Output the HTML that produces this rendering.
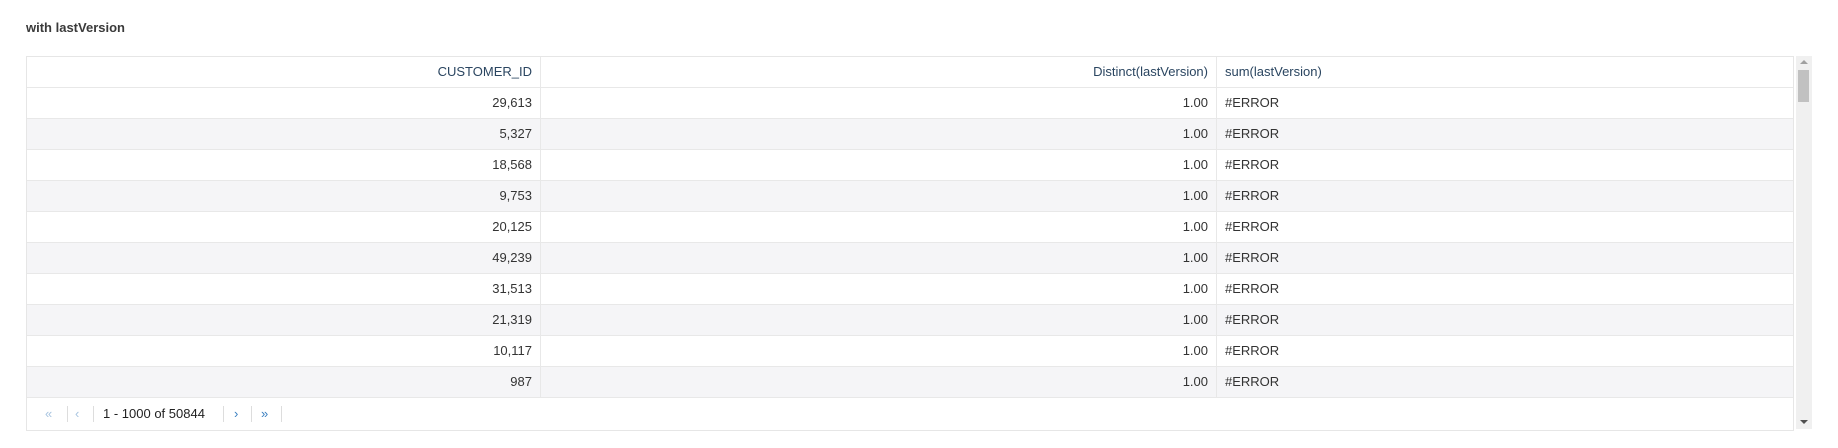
<!DOCTYPE html>
<html><head><meta charset="utf-8"><style>
body{margin:0;width:1838px;height:448px;background:#fff;font-family:"Liberation Sans",sans-serif;position:relative;overflow:hidden;color:#333}
.title{position:absolute;left:26px;top:20px;font-size:13px;font-weight:bold;color:#3a3a3a}
.tbl{position:absolute;left:26px;top:56px;width:1768px;border:1px solid #e6e6e6;box-sizing:border-box}
.row{height:31px;display:flex;border-bottom:1px solid #e8e8e8;box-sizing:border-box;font-size:13px;line-height:30px}
.row.alt{background:#f5f5f7}
.c1{width:514px;text-align:right;padding-right:8px;box-sizing:border-box;border-right:1px solid #e8e8e8}
.c2{width:676px;text-align:right;padding-right:8px;box-sizing:border-box;border-right:1px solid #e8e8e8}
.c3{padding-left:8px}
.hdr{color:#2a4560}
.pager{height:32px;position:relative;font-size:13px;line-height:32px}
.pager span{position:absolute}
.sep{position:absolute;top:8px;width:1px;height:16px;background:#ddd}
.sb{position:absolute;left:1796px;top:56px;width:16px;height:373px;background:#f0f0f0}
.thumb{position:absolute;left:1798px;top:70px;width:11px;height:32px;background:#c1c1c1}
</style></head><body>
<div class="title">with lastVersion</div>
<div class="tbl">
<div class="row hdr"><div class="c1">CUSTOMER_ID</div><div class="c2">Distinct(lastVersion)</div><div class="c3">sum(lastVersion)</div></div>
<div class="row"><div class="c1">29,613</div><div class="c2">1.00</div><div class="c3">#ERROR</div></div>
<div class="row alt"><div class="c1">5,327</div><div class="c2">1.00</div><div class="c3">#ERROR</div></div>
<div class="row"><div class="c1">18,568</div><div class="c2">1.00</div><div class="c3">#ERROR</div></div>
<div class="row alt"><div class="c1">9,753</div><div class="c2">1.00</div><div class="c3">#ERROR</div></div>
<div class="row"><div class="c1">20,125</div><div class="c2">1.00</div><div class="c3">#ERROR</div></div>
<div class="row alt"><div class="c1">49,239</div><div class="c2">1.00</div><div class="c3">#ERROR</div></div>
<div class="row"><div class="c1">31,513</div><div class="c2">1.00</div><div class="c3">#ERROR</div></div>
<div class="row alt"><div class="c1">21,319</div><div class="c2">1.00</div><div class="c3">#ERROR</div></div>
<div class="row"><div class="c1">10,117</div><div class="c2">1.00</div><div class="c3">#ERROR</div></div>
<div class="row alt"><div class="c1">987</div><div class="c2">1.00</div><div class="c3">#ERROR</div></div>
<div class="pager">
<span style="left:18px;color:#a8c4e0">«</span><div class="sep" style="left:40px"></div>
<span style="left:48px;color:#a8c4e0">‹</span><div class="sep" style="left:66px"></div>
<span style="left:76px;color:#222">1 - 1000 of 50844</span><div class="sep" style="left:196px"></div>
<span style="left:207px;color:#3a7fc0">›</span><div class="sep" style="left:224px"></div>
<span style="left:234px;color:#3a7fc0">»</span><div class="sep" style="left:254px"></div>
</div>
</div>
<div class="sb"></div><div class="thumb"></div>
<div style="position:absolute;left:1800px;top:60px;width:0;height:0;border-left:4px solid transparent;border-right:4px solid transparent;border-bottom:4px solid #a0a0a0"></div>
<div style="position:absolute;left:1800px;top:420px;width:0;height:0;border-left:4px solid transparent;border-right:4px solid transparent;border-top:4px solid #505050"></div>
</body></html>
